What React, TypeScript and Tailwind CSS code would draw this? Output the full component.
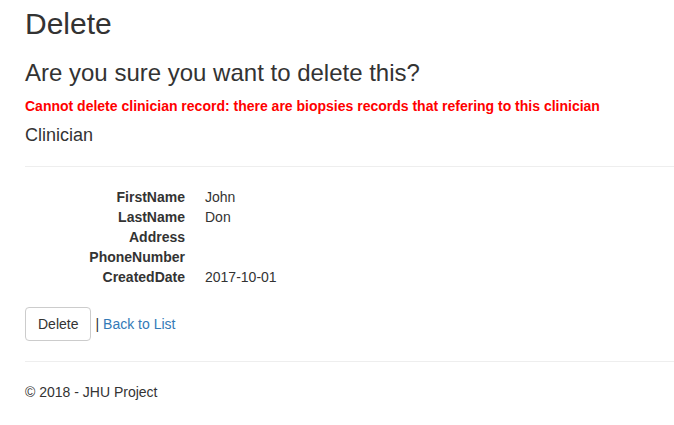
export default function App() {
  const rows: [string, string][] = [
    ["FirstName", "John"],
    ["LastName", "Don"],
    ["Address", ""],
    ["PhoneNumber", ""],
    ["CreatedDate", "2017-10-01"],
  ];

  return (
    <div className="min-h-screen bg-white text-[#333] text-[14px] leading-[20px] font-['Liberation_Sans',Arial,sans-serif]">
      <div className="pl-[25px] pt-[7px]">
        <h2 className="text-[30px] leading-[33px] font-normal mb-[20px]">Delete</h2>
        <h3 className="text-[24px] leading-[26.4px] font-normal mb-[10px]">Are you sure you want to delete this?</h3>
        <div className="text-[#ff0000] font-bold">
          Cannot delete clinician record: there are biopsies records that refering to this clinician
        </div>
        <div>
          <h4 className="text-[18px] leading-[19.8px] font-normal mt-[10px] mb-[20px]">Clinician</h4>
          <hr className="border-0 border-t border-[#eee] mb-[20px]" />
          <dl className="mb-[20px]">
            {rows.map(([k, v]) => (
              <div key={k} className="flex h-[20px]">
                <dt className="w-[160px] shrink-0 text-right font-bold">{k}</dt>
                <dd className="ml-[20px]">{v}</dd>
              </div>
            ))}
          </dl>
          <div className="flex items-center">
            <button className="h-[34px] px-[12px] border border-[#ccc] rounded-[4px] bg-white text-[#333] text-[14px] leading-[20px]">
              Delete
            </button>
            <span className="ml-[4px]">|</span>
            <a href="#" className="ml-[4px] text-[#337ab7]">Back to List</a>
          </div>
        </div>
        <hr className="border-0 border-t border-[#eee] mt-[20px] mb-[20px]" />
        <footer>
          <p>© 2018 - JHU Project</p>
        </footer>
      </div>
    </div>
  );
}
